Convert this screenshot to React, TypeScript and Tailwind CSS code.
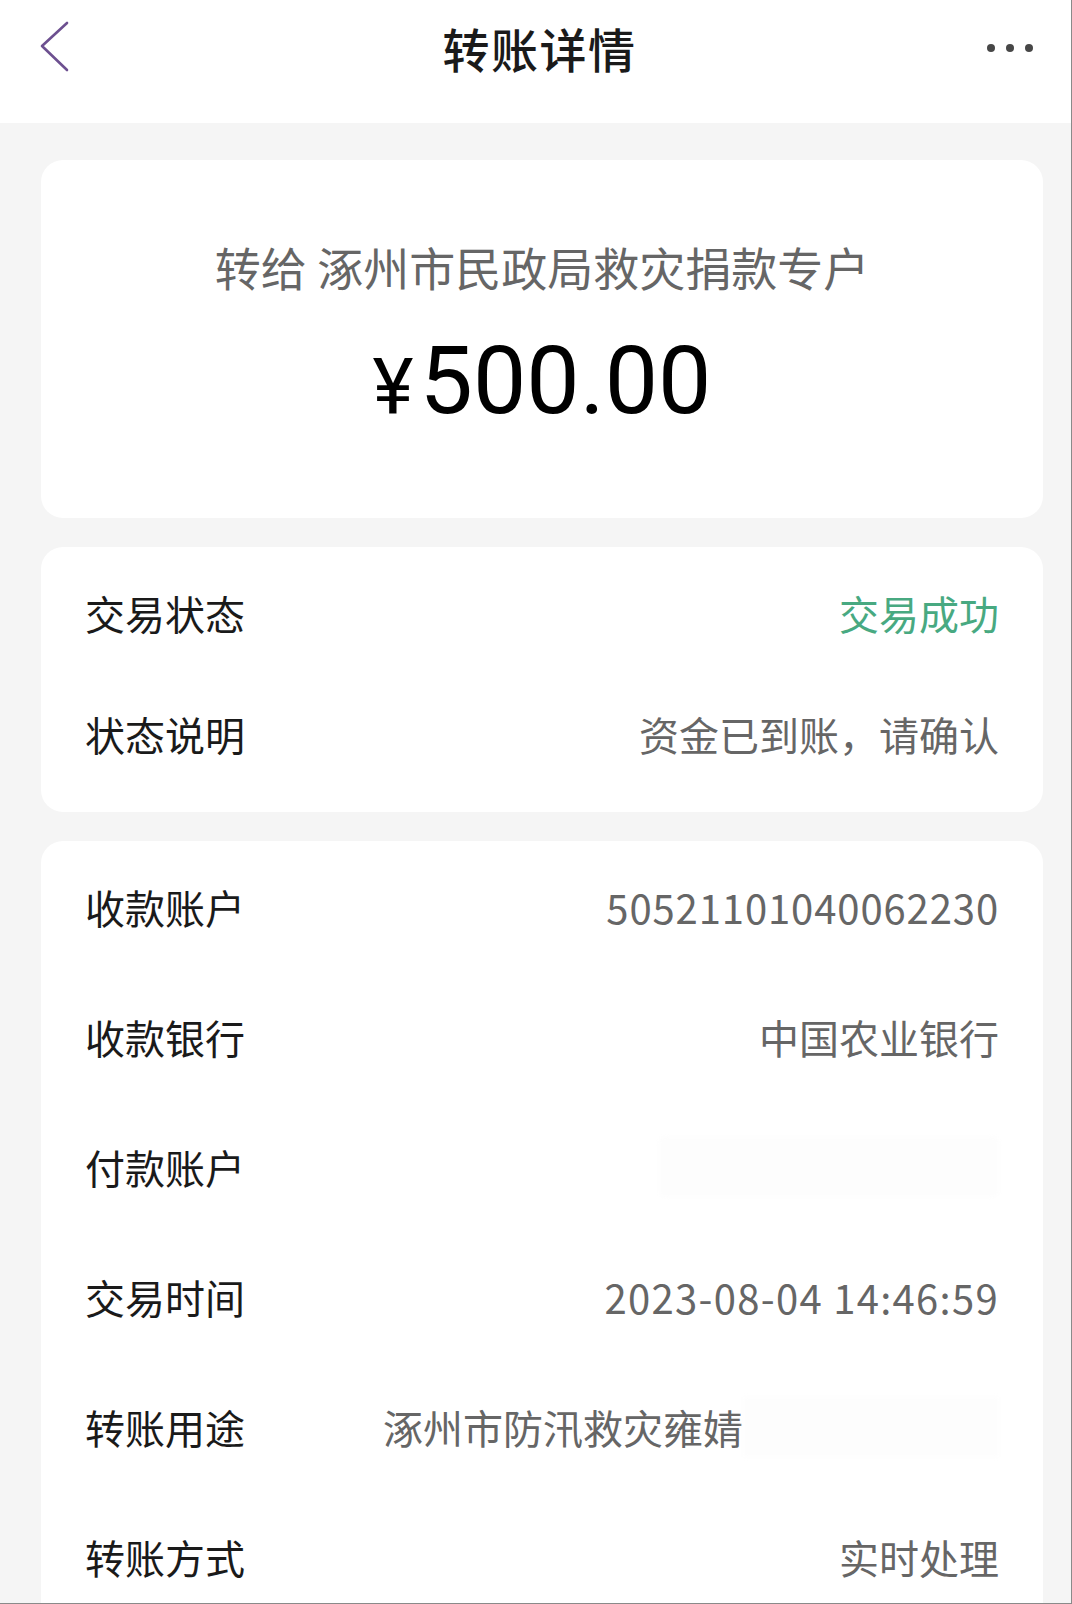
import React from "react";

const font = "font-['Noto_Sans_CJK_SC','Noto_Sans',sans-serif]";

function Row({
  label,
  value,
  h,
  valueClass = "text-[#666666]",
  children,
}: {
  label: string;
  value?: string;
  h: string;
  valueClass?: string;
  children?: React.ReactNode;
}) {
  return (
    <div className={`flex items-center justify-between ${h}`}>
      <span className="text-[40px] leading-[48px] text-[#1a1a1a] whitespace-nowrap">{label}</span>
      {children ?? (
        <span className={`text-[40px] leading-[48px] whitespace-nowrap ${valueClass}`}>{value}</span>
      )}
    </div>
  );
}

export default function App() {
  return (
    <div
      className={`${font} w-[1072px] h-[1604px] overflow-hidden bg-[#f5f5f5] flex flex-col border-r border-b border-[#8a8a8a]`}
    >
      {/* Header */}
      <header className="h-[123px] shrink-0 bg-white">
        <div className="h-[96px] flex items-center justify-between pl-[40px] pr-[38px]">
          <svg width="30" height="52" viewBox="0 0 30 52" fill="none" className="mt-[-2px]">
            <polyline
              points="27,2 2,25 27,49"
              stroke="#6d5090"
              strokeWidth="2.6"
              strokeLinecap="round"
              strokeLinejoin="round"
            />
          </svg>
          <h1 className="text-[47px] leading-[56px] font-medium text-[#1a1a1a] tracking-[1.5px] ml-[22px]">
            转账详情
          </h1>
          <div className="flex items-center gap-[11px]">
            <span className="w-[8px] h-[8px] rounded-full bg-[#474747]" />
            <span className="w-[8px] h-[8px] rounded-full bg-[#474747]" />
            <span className="w-[8px] h-[8px] rounded-full bg-[#474747]" />
          </div>
        </div>
      </header>

      <main className="flex-1 pl-[41px] pr-[28px] pt-[37px] flex flex-col gap-[29px]">
        {/* Amount card */}
        <section className="bg-white rounded-[22px] h-[358px] shrink-0 flex flex-col items-center pt-[82px]">
          <p className="text-[46px] leading-[48px] text-[#666666] whitespace-nowrap">
            转给 涿州市民政局救灾捐款专户
          </p>
          <p className="mt-[44px] flex items-baseline font-['Roboto',sans-serif] text-black leading-[94px]">
            <span className="text-[78px] mr-[6px]">¥</span>
            <span className="text-[95px]">500.00</span>
          </p>
        </section>

        {/* Status card */}
        <section className="bg-white rounded-[22px] h-[265px] shrink-0 px-[44px] pt-[5px]">
          <Row label="交易状态" value="交易成功" h="h-[121px]" valueClass="text-[#48a981]" />
          <Row label="状态说明" value="资金已到账，请确认" h="h-[121px]" />
        </section>

        {/* Detail card */}
        <section className="bg-white rounded-t-[22px] flex-1 px-[44px] pt-[1px]">
          <Row
            label="收款账户"
            value="50521101040062230"
            h="h-[130px]"
            valueClass="text-[#666666] tracking-[0.9px]"
          />
          <Row label="收款银行" value="中国农业银行" h="h-[130px]" />
          <Row label="付款账户" h="h-[130px]">
            <span className="w-[340px] h-[60px] rounded-md bg-[#fdfdfd] blur-[2px]" />
          </Row>
          <Row
            label="交易时间"
            value="2023-08-04 14:46:59"
            h="h-[130px]"
            valueClass="text-[#666666] tracking-[1.3px]"
          />
          <Row label="转账用途" h="h-[130px]">
            <div className="flex items-center">
              <span className="text-[40px] leading-[48px] text-[#666666] whitespace-nowrap">
                涿州市防汛救灾雍婧
              </span>
              <span className="w-[256px] h-[60px] bg-[#fdfdfd] blur-[2px]" />
            </div>
          </Row>
          <Row label="转账方式" value="实时处理" h="h-[130px]" />
        </section>
      </main>
    </div>
  );
}
